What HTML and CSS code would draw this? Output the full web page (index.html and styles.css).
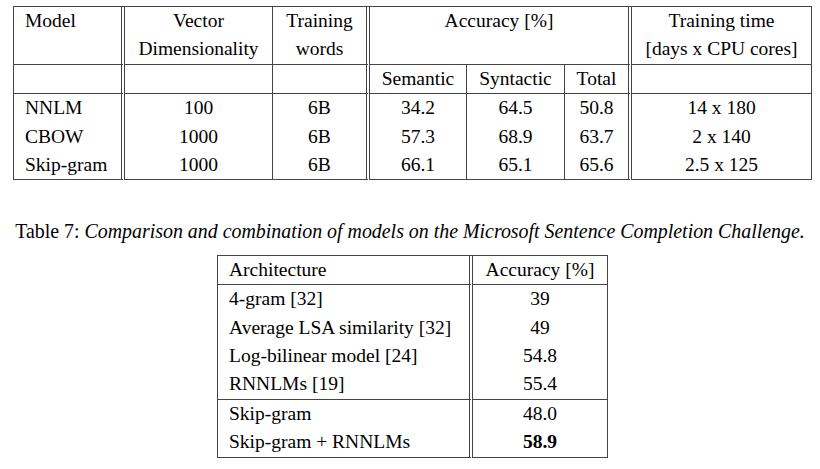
FILE: index.html
```html
<!DOCTYPE html>
<html lang="en">
<head>
<meta charset="utf-8">
<title>Tables</title>
<link rel="stylesheet" href="styles.css">
</head>
<body>
<div class="page">
  <table class="grid t1">
    <colgroup>
      <col class="w111"><col class="w148"><col class="w97"><col class="w97"><col class="w98"><col class="w67"><col class="w180">
    </colgroup>
    <tr class="hl">
      <td class="left dbl">Model</td>
      <td>Vector<br>Dimensionality</td>
      <td class="dbl">Training<br>words</td>
      <td colspan="3" class="dbl">Accuracy [%]</td>
      <td>Training time<br>[days x CPU cores]</td>
    </tr>
    <tr class="hl">
      <td class="left dbl"></td>
      <td></td>
      <td class="dbl"></td>
      <td>Semantic</td>
      <td>Syntactic</td>
      <td class="dbl">Total</td>
      <td></td>
    </tr>
    <tr>
      <td class="left dbl">NNLM</td><td>100</td><td class="dbl">6B</td><td>34.2</td><td>64.5</td><td class="dbl">50.8</td><td>14 x 180</td>
    </tr>
    <tr>
      <td class="left dbl">CBOW</td><td>1000</td><td class="dbl">6B</td><td>57.3</td><td>68.9</td><td class="dbl">63.7</td><td>2 x 140</td>
    </tr>
    <tr class="hl">
      <td class="left dbl">Skip-gram</td><td>1000</td><td class="dbl">6B</td><td>66.1</td><td>65.1</td><td class="dbl">65.6</td><td>2.5 x 125</td>
    </tr>
  </table>

  <p class="caption">Table 7: <em>Comparison and combination of models on the Microsoft Sentence Completion Challenge.</em></p>

  <table class="grid t2">
    <colgroup>
      <col class="w255"><col class="w135">
    </colgroup>
    <tr class="hl"><td class="left dbl">Architecture</td><td>Accuracy [%]</td></tr>
    <tr><td class="left dbl">4-gram [32]</td><td>39</td></tr>
    <tr><td class="left dbl">Average LSA similarity [32]</td><td>49</td></tr>
    <tr><td class="left dbl">Log-bilinear model [24]</td><td>54.8</td></tr>
    <tr class="hl"><td class="left dbl">RNNLMs [19]</td><td>55.4</td></tr>
    <tr><td class="left dbl">Skip-gram</td><td>48.0</td></tr>
    <tr class="hl"><td class="left dbl">Skip-gram + RNNLMs</td><td><strong>58.9</strong></td></tr>
  </table>
</div>
</body>
</html>
```

FILE: styles.css
```css
html, body {
  margin: 0;
  padding: 0;
  background: #ffffff;
}

.page {
  width: 815px;
  padding: 6px 0 0 5px;
  font-family: "Liberation Serif", "Times New Roman", serif;
  font-size: 19.5px;
  line-height: 28.4px;
  color: #000000;
}

.grid {
  border-collapse: separate;
  border-spacing: 0;
  table-layout: fixed;
  margin: 0 auto;
  border-left: 1px solid #444444;
  border-top: 1px solid #444444;
}

.t1 { width: 799px; }
.t2 { width: 391px; }

.w111 { width: 111px; }
.w148 { width: 148px; }
.w97 { width: 97px; }
.w98 { width: 98px; }
.w67 { width: 67px; }
.w180 { width: 180px; }
.w255 { width: 255px; }
.w135 { width: 135px; }

.grid td {
  padding: 0 11px;
  text-align: center;
  vertical-align: top;
  white-space: nowrap;
  border-right: 1px solid #444444;
  height: 28.4px;
}

.grid td.left { text-align: left; }

.grid td.dbl { border-right: 4px double #444444; }

.grid tr.hl td { border-bottom: 1px solid #444444; }

.grid strong { font-weight: bold; }

.caption {
  margin: 37px 0 9px -5px;
  text-align: center;
  white-space: nowrap;
  font-size: 19.9px;
}

.caption em { font-style: italic; }
```
